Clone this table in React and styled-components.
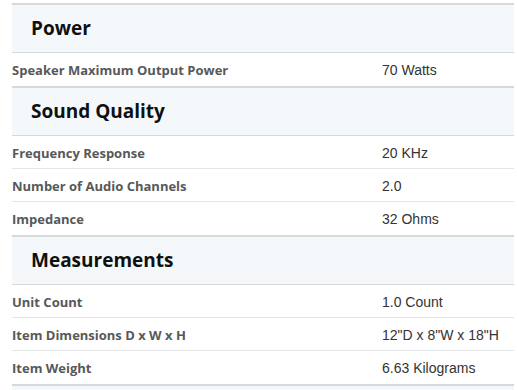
import React from "react";
import styled, { createGlobalStyle } from "styled-components";

const specs = [
  {
    title: "Power",
    rows: [["Speaker Maximum Output Power", "70 Watts"]],
  },
  {
    title: "Sound Quality",
    rows: [
      ["Frequency Response", "20 KHz"],
      ["Number of Audio Channels", "2.0"],
      ["Impedance", "32 Ohms"],
    ],
  },
  {
    title: "Measurements",
    rows: [
      ["Unit Count", "1.0 Count"],
      ["Item Dimensions D x W x H", '12"D x 8"W x 18"H'],
      ["Item Weight", "6.63 Kilograms"],
    ],
  },
  // next section starts just below the fold
  {
    title: "",
    rows: [],
  },
];

const GlobalStyle = createGlobalStyle`
  html, body {
    margin: 0;
    padding: 0;
    background: #fff;
  }
  body {
    font-family: "Open Sans", "Noto Sans", sans-serif;
    overflow: hidden;
  }
`;

const Page = styled.div`
  padding: 3px 3px 0 12px;
`;

const Section = styled.section`
  border-top: 2px solid #d5d9d9;
`;

const Header = styled.h2`
  margin: 0;
  height: 46px;
  display: flex;
  align-items: center;
  padding: 0 0 1px 19px;
  background: #f5f8fa;
  border-bottom: 1px solid #d5d9d9;
  font-family: "Open Sans", "Noto Sans", sans-serif;
  font-size: 19px;
  font-weight: 700;
  color: #0f1111;
`;

const Row = styled.div`
  display: grid;
  grid-template-columns: 370px 1fr;
  align-items: center;
  height: 32px;
  border-bottom: 1px solid ${(p) => (p.last ? "transparent" : "#e3e6e6")};
`;

const Label = styled.span`
  font-family: "Open Sans", "Noto Sans", sans-serif;
  font-size: 13px;
  font-weight: 700;
  color: #565959;
  padding-top: 1px;
`;

const Value = styled.span`
  font-family: "Liberation Sans", Arial, sans-serif;
  font-size: 14px;
  color: #333;
  padding-top: 1px;
`;

const App = () => {
  return (
    <>
      <GlobalStyle />
      <Page>
        {specs.map((s, n) => (
          <Section key={n}>
            <Header>{s.title}</Header>
            {s.rows.map(([k, v], i) => (
              <Row key={k} last={i === s.rows.length - 1}>
                <Label>{k}</Label>
                <Value>{v}</Value>
              </Row>
            ))}
          </Section>
        ))}
      </Page>
    </>
  );
};

export default App;
